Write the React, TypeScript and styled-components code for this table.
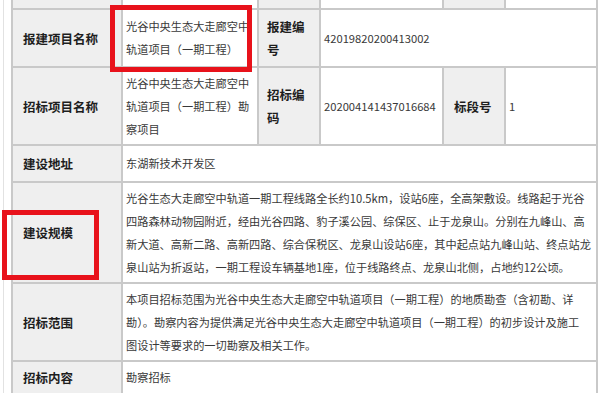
import { ReactNode } from 'react'
import { createGlobalStyle, styled } from 'styled-components'

const GlobalStyle = createGlobalStyle`
  html, body {
    margin: 0;
    padding: 0;
    background: #ffffff;
  }
  body {
    font-family: "Noto Sans CJK SC", "Noto Sans", sans-serif;
  }
`

const Page = styled.div`
  position: relative;
  width: 600px;
  height: 400px;
  overflow: hidden;
  background: #ffffff;
`

const Frame = styled.div`
  margin-left: 3px;
  padding-left: 7px;
  border-left: 1px solid #e2e2e2;
  width: 585px;
`

const Table = styled.table`
  width: 585px;
  table-layout: fixed;
  border-collapse: collapse;
`

const Row = styled.tr<{ $h: number }>`
  height: ${(p) => p.$h}px;
`

const Cell = styled.td<{ $open?: 'top' | 'bottom' }>`
  border: 2px solid #c9c9c9;
  ${(p) => (p.$open === 'top' ? 'border-top: none;' : '')}
  ${(p) => (p.$open === 'bottom' ? 'border-bottom: none;' : '')}
  vertical-align: middle;
  padding: 0;
`

const Label = styled(Cell)<{ $pad?: number }>`
  background: #efefef;
  color: #1e1e1e;
  font-weight: 700;
  font-size: 12.5px;
  line-height: 23px;
  padding-left: ${(p) => p.$pad ?? 10}px;
  padding-right: 4px;
`

const Value = styled(Cell)`
  background: #ffffff;
  color: #383838;
  font-size: 11.2px;
  line-height: 23px;
  padding: 0 4px 0 3px;
`

const Mark = styled.div<{ $x: number; $y: number; $w: number; $h: number }>`
  position: absolute;
  left: ${(p) => p.$x}px;
  top: ${(p) => p.$y}px;
  width: ${(p) => p.$w}px;
  height: ${(p) => p.$h}px;
  box-sizing: border-box;
  border: 5px solid #e8121b;
  pointer-events: none;
`

const Lines = ({ items }: { items: ReactNode[] }) => (
  <>
    {items.map((t, i) => (
      <span key={i}>
        {t}
        {i < items.length - 1 && <br />}
      </span>
    ))}
  </>
)

export default function App() {
  return (
    <Page>
      <GlobalStyle />
      <Frame>
        <Table>
          <colgroup>
            <col style={{ width: 110 }} />
            <col style={{ width: 136 }} />
            <col style={{ width: 62 }} />
            <col style={{ width: 123 }} />
            <col style={{ width: 62 }} />
            <col style={{ width: 92 }} />
          </colgroup>
          <tbody>
            <Row $h={9}>
              <Label $open="top" />
              <Value $open="top" />
              <Label $open="top" />
              <Value $open="top" />
              <Label $open="top" />
              <Value $open="top" />
            </Row>
            <Row $h={58}>
              <Label>报建项目名称</Label>
              <Value>
                <Lines items={['光谷中央生态大走廊空中', '轨道项目（一期工程）']} />
              </Value>
              <Label $pad={8}>报建编号</Label>
              <Value colSpan={3}>42019820200413002</Value>
            </Row>
            <Row $h={78}>
              <Label>招标项目名称</Label>
              <Value>
                <Lines
                  items={['光谷中央生态大走廊空中', '轨道项目（一期工程）勘', '察项目']}
                />
              </Value>
              <Label $pad={8}>招标编码</Label>
              <Value>202004141437016684</Value>
              <Label $pad={10}>标段号</Label>
              <Value>1</Value>
            </Row>
            <Row $h={37}>
              <Label>建设地址</Label>
              <Value colSpan={5}>东湖新技术开发区</Value>
            </Row>
            <Row $h={101}>
              <Label>建设规模</Label>
              <Value colSpan={5}>
                <Lines
                  items={[
                    '光谷生态大走廊空中轨道一期工程线路全长约10.5km，设站6座，全高架敷设。线路起于光谷',
                    '四路森林动物园附近，经由光谷四路、豹子溪公园、综保区、止于龙泉山。分别在九峰山、高',
                    '新大道、高新二路、高新四路、综合保税区、龙泉山设站6座，其中起点站九峰山站、终点站龙',
                    '泉山站为折返站，一期工程设车辆基地1座，位于线路终点、龙泉山北侧，占地约12公顷。'
                  ]}
                />
              </Value>
            </Row>
            <Row $h={78}>
              <Label>招标范围</Label>
              <Value colSpan={5}>
                <Lines
                  items={[
                    '本项目招标范围为光谷中央生态大走廊空中轨道项目（一期工程）的地质勘查（含初勘、详',
                    '勘）。勘察内容为提供满足光谷中央生态大走廊空中轨道项目（一期工程）的初步设计及施工',
                    '图设计等要求的一切勘察及相关工作。'
                  ]}
                />
              </Value>
            </Row>
            <Row $h={32}>
              <Label $open="bottom">招标内容</Label>
              <Value $open="bottom" colSpan={5}>
                勘察招标
              </Value>
            </Row>
          </tbody>
        </Table>
      </Frame>
      <Mark $x={110} $y={5} $w={142} $h={67} />
      <Mark $x={2} $y={210} $w={97} $h={70} />
    </Page>
  )
}
